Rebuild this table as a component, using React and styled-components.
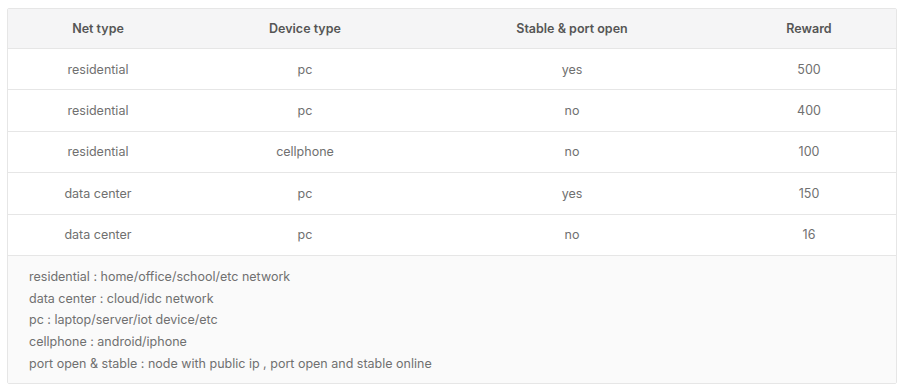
import styled, { createGlobalStyle } from "styled-components";

const Global = createGlobalStyle`
  body {
    margin: 0;
    background: #fff;
    font-family: Inter, "Liberation Sans", sans-serif;
  }
`

const Wrap = styled.div`
  padding: 8px 8px 0 7px;
`

const Box = styled.div`
  border: 1px solid #e6e6e6;
  border-radius: 2px;
  overflow: hidden;
`

const Table = styled.table`
  width: 100%;
  border-collapse: collapse;
  table-layout: fixed;
`

const Th = styled.th`
  width: ${p => p.w}px;
  height: 39px;
  padding: 0;
  background: #f5f5f6;
  color: #555;
  font-size: 12.5px;
  font-weight: 600;
  text-align: center;
  border-bottom: 1px solid #e6e6e6;
`

const Td = styled.td`
  height: 40.4px;
  padding: 0;
  color: #707070;
  font-size: 12.5px;
  font-weight: 400;
  text-align: center;
  border-bottom: 1px solid #e6e6e6;
`

const Notes = styled.div`
  background: #fafafa;
  padding: 10px 21px 8px;
  color: #707070;
  font-size: 12.5px;
  line-height: 21.75px;
`

const rows = [
  ["residential", "pc", "yes", "500"],
  ["residential", "pc", "no", "400"],
  ["residential", "cellphone", "no", "100"],
  ["data center", "pc", "yes", "150"],
  ["data center", "pc", "no", "16"],
];

const notes = [
  "residential : home/office/school/etc network",
  "data center : cloud/idc network",
  "pc : laptop/server/iot device/etc",
  "cellphone : android/iphone",
  "port open & stable : node with public ip , port open and stable online",
];

export default function App() {
  return (
    <Wrap>
      <Global />
      <Box>
        <Table>
          <thead>
            <tr>
              <Th w={180}>Net type</Th>
              <Th w={234}>Device type</Th>
              <Th w={300}>Stable &amp; port open</Th>
              <Th>Reward</Th>
            </tr>
          </thead>
          <tbody>
            {rows.map((r, i) => (
              <tr key={i}>
                {r.map((c, j) => <Td key={j}>{c}</Td>)}
              </tr>
            ))}
          </tbody>
        </Table>
        <Notes>
          {notes.map(n => <div key={n}>{n}</div>)}
        </Notes>
      </Box>
    </Wrap>
  );
}
